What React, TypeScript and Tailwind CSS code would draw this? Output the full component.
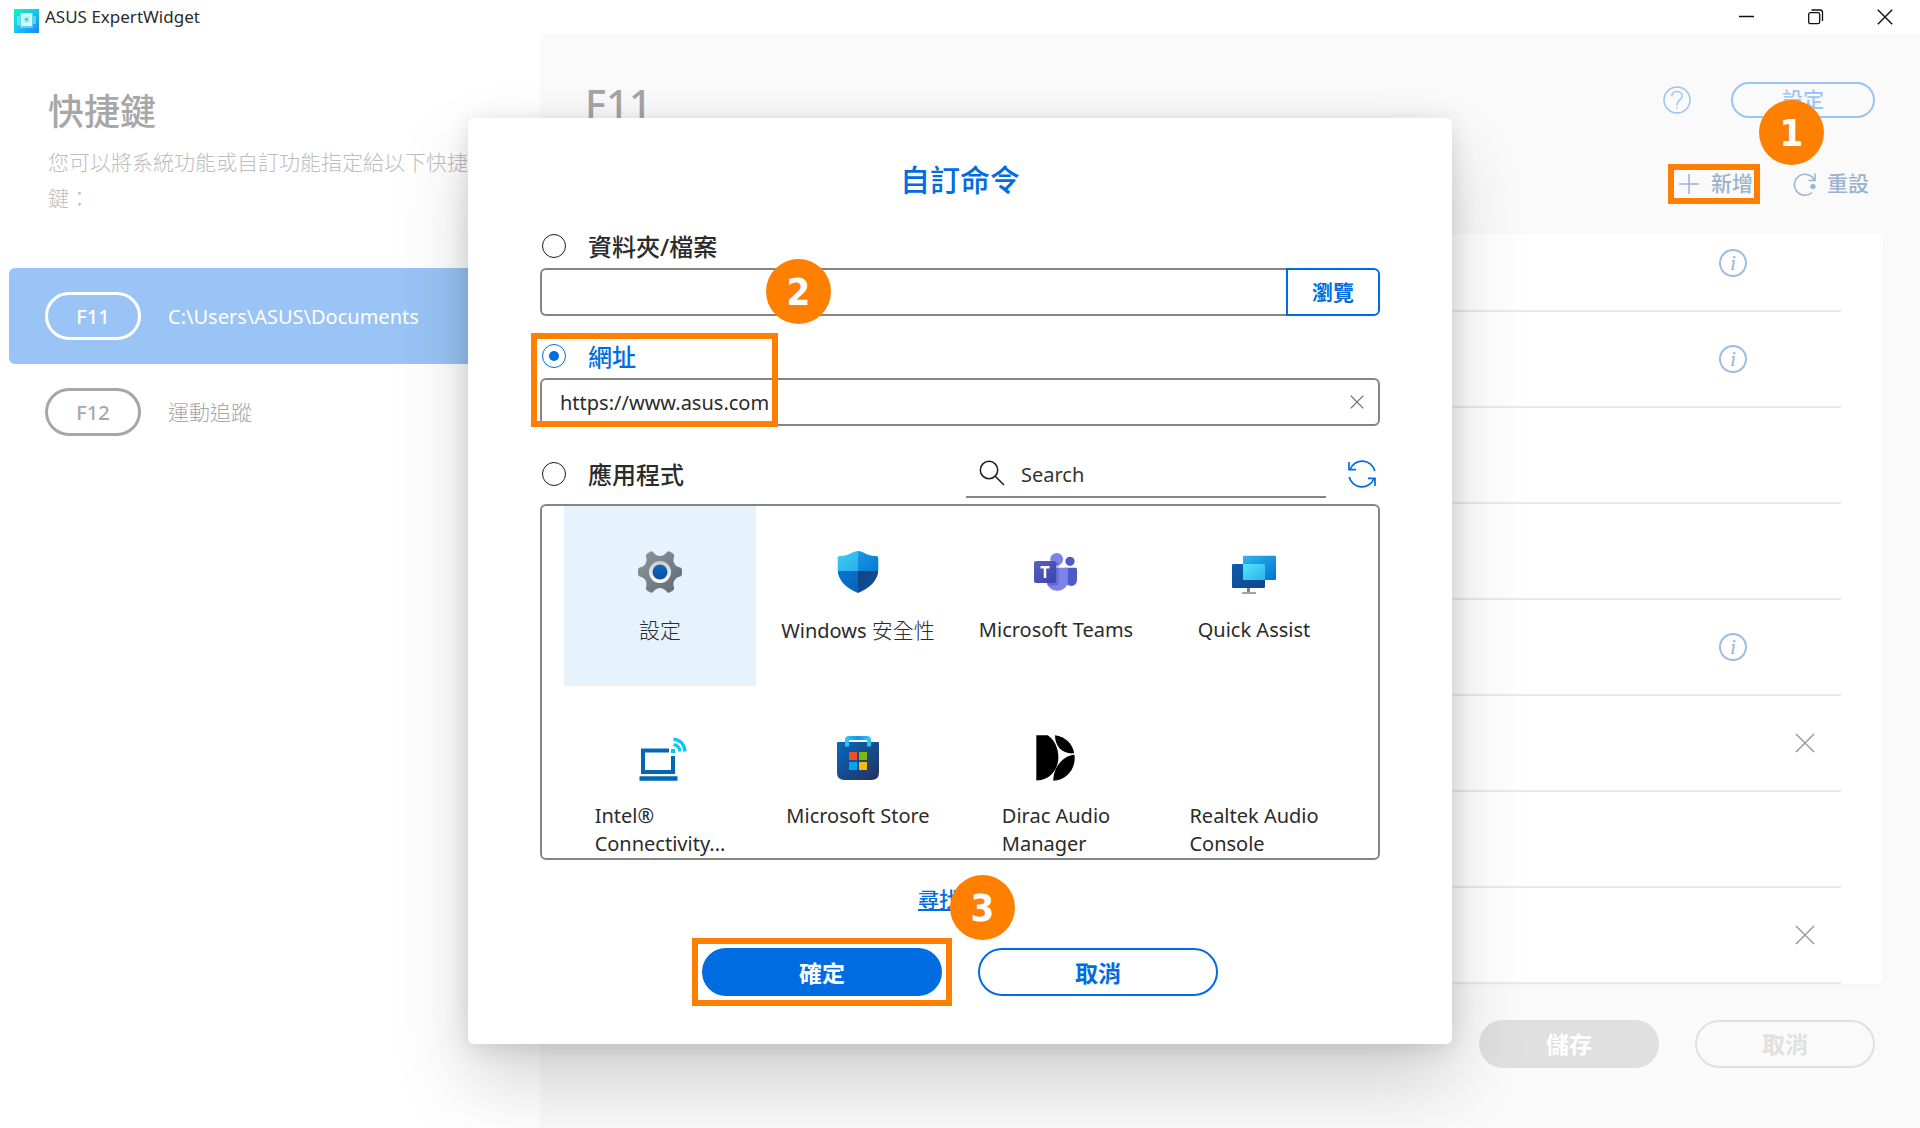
import React from 'react';

type AppEntry = { lines: React.ReactNode[]; icon: React.ReactNode };

function LogoIcon() {
  return (
    <svg width="25" height="24" viewBox="0 0 25 24" aria-hidden="true">
      <defs>
        <linearGradient id="logo" x1="0" y1="0" x2="1" y2="1">
          <stop offset="0" stopColor="#08fcc0" />
          <stop offset="0.5" stopColor="#18c4ee" />
          <stop offset="1" stopColor="#2080ff" />
        </linearGradient>
      </defs>
      <rect width="25" height="24" fill="url(#logo)" />
      <path d="M6 4H19V7H22V15H19V19H6V16H3V7H6Z" fill="#8ce8f8" opacity="0.6" />
      <rect x="7" y="4" width="11" height="13" rx="1" fill="#d8fbfc" />
      <rect x="9" y="7" width="7" height="7" fill="#b4f2f6" />
      <rect x="11" y="9" width="3" height="3" fill="#40cce4" />
    </svg>
  );
}

function CrossIcon({ size, width = 1 }: { size: number; width?: number }) {
  return (
    <svg width={size} height={size} viewBox="0 0 20 20" fill="none" stroke="currentColor" strokeWidth={(width * 20) / size} aria-hidden="true">
      <path d="M1 1 19 19M19 1 1 19" />
    </svg>
  );
}

function GearIcon() {
  return (
    <svg width="48" height="48" viewBox="0 0 48 48" aria-hidden="true">
      <defs>
        <linearGradient id="gear" x1="0" y1="0" x2="1" y2="1">
          <stop offset="0" stopColor="#8f979d" />
          <stop offset="1" stopColor="#5f6a74" />
        </linearGradient>
        <linearGradient id="gearRing" x1="0" y1="0" x2="0" y2="1">
          <stop offset="0" stopColor="#c9cbcd" />
          <stop offset="1" stopColor="#fff" />
        </linearGradient>
        <linearGradient id="gearDot" x1="0" y1="0" x2="0" y2="1">
          <stop offset="0" stopColor="#0868c0" />
          <stop offset="1" stopColor="#0c4f9e" />
        </linearGradient>
      </defs>
      <path
        fill="url(#gear)"
        d="M14.500 3.500 Q16 2.800 17.500 4.500 C21 9.200 27 9.200 30.500 4.500 Q32 2.800 33.500 3.500 L37 5.600 Q38.700 6.800 38 8.800 C36.200 14 39 18.800 44.400 19.600 Q46 20 46 22 V26 Q46 28 44.400 28.400 C39 29.200 36.200 34 38 39.200 Q38.700 41.200 37 42.400 L33.500 44.500 Q32 45.200 30.500 43.500 C27 38.800 21 38.800 17.500 43.500 Q16 45.200 14.500 44.500 L11 42.400 Q9.300 41.200 10 39.200 C11.800 34 9 29.200 3.600 28.400 Q2 28 2 26 V22 Q2 20 3.600 19.600 C9 18.800 11.800 14 10 8.800 Q9.300 6.800 11 5.600Z"
      />
      <circle cx="24" cy="24" r="11" fill="url(#gearRing)" />
      <circle cx="24" cy="24" r="7.500" fill="url(#gearDot)" />
    </svg>
  );
}

function ShieldIcon() {
  return (
    <svg width="48" height="48" viewBox="0 0 48 48" aria-hidden="true">
      <defs>
        <clipPath id="shield">
          <path d="M24 3C29 3 33 8.300 42.500 8Q44.300 8 44.300 10V22C44.300 32 36 40 24 45C12 40 3.700 32 3.700 22V10Q3.700 8 5.500 8C15 8.300 19 3 24 3Z" />
        </clipPath>
        <linearGradient id="sh1" x1="0" y1="0" x2="1" y2="1">
          <stop offset="0" stopColor="#3fd0fa" />
          <stop offset="1" stopColor="#2bb0e8" />
        </linearGradient>
        <linearGradient id="sh2" x1="0" y1="0" x2="1" y2="1">
          <stop offset="0" stopColor="#1c98e4" />
          <stop offset="1" stopColor="#0478d4" />
        </linearGradient>
        <linearGradient id="sh3" x1="0" y1="0" x2="1" y2="1">
          <stop offset="0" stopColor="#0478d4" />
          <stop offset="1" stopColor="#0862b8" />
        </linearGradient>
        <linearGradient id="sh4" x1="0" y1="0" x2="1" y2="1">
          <stop offset="0" stopColor="#143f80" />
          <stop offset="1" stopColor="#0f58a8" />
        </linearGradient>
      </defs>
      <g clipPath="url(#shield)">
        <rect width="24" height="23" fill="url(#sh1)" />
        <rect x="24" width="24" height="23" fill="url(#sh2)" />
        <rect y="23" width="24" height="25" fill="url(#sh3)" />
        <rect x="24" y="23" width="24" height="25" fill="url(#sh4)" />
      </g>
    </svg>
  );
}

function TeamsIcon() {
  return (
    <svg width="48" height="48" viewBox="0 0 48 48" aria-hidden="true">
      <defs>
        <linearGradient id="tm" x1="0" y1="0" x2="1" y2="1">
          <stop offset="0" stopColor="#5a62c3" />
          <stop offset="1" stopColor="#3940ab" />
        </linearGradient>
      </defs>
      <circle cx="38" cy="13.300" r="4.600" fill="#5059c9" />
      <path d="M33 19.700H43.500Q45 19.700 45 21.200V31.500Q45 38 39 38Q36 38 33 35Z" fill="#5059c9" />
      <circle cx="24.700" cy="11.300" r="6.400" fill="#7b83eb" />
      <path d="M14.700 19.700H34.500Q36 19.700 36 21.200V32C36 38.500 31.500 42.700 25.300 42.700C19 42.700 14.700 38.500 14.700 32Z" fill="#7b83eb" />
      <path d="M15 14H24.500Q26.500 14 26.500 16V35Q26.500 37.500 24 37.500H15Z" fill="#3a3f9c" opacity="0.35" />
      <rect x="2" y="13" width="22" height="22" rx="2" fill="url(#tm)" />
      <path d="M8.500 19.200H17.500M13 18V30" stroke="#fff" strokeWidth="2.500" />
    </svg>
  );
}

function QuickAssistIcon() {
  return (
    <svg width="48" height="48" viewBox="0 0 48 48" aria-hidden="true">
      <defs>
        <linearGradient id="qa1" x1="0" y1="0" x2="1" y2="1">
          <stop offset="0" stopColor="#2fb4ee" />
          <stop offset="1" stopColor="#0274d2" />
        </linearGradient>
        <linearGradient id="qa2" x1="0" y1="0" x2="1" y2="1">
          <stop offset="0" stopColor="#0c5cae" />
          <stop offset="1" stopColor="#13468a" />
        </linearGradient>
        <linearGradient id="qa3" x1="0" y1="0" x2="1" y2="1">
          <stop offset="0" stopColor="#52e4ff" />
          <stop offset="1" stopColor="#2cb2ea" />
        </linearGradient>
      </defs>
      <rect x="17" y="40" width="3" height="4.500" fill="#7c8792" />
      <rect x="12" y="44" width="14" height="2" rx="0.700" fill="#9aa3ab" />
      <rect x="13" y="7.700" width="33" height="24.300" rx="1.200" fill="url(#qa1)" />
      <rect x="2" y="16" width="33" height="24" rx="1.200" fill="url(#qa2)" />
      <path d="M13 16H34Q35 16 35 17V32H14Q13 32 13 31Z" fill="url(#qa3)" />
    </svg>
  );
}

function IntelIcon() {
  return (
    <svg width="48" height="48" viewBox="0 0 48 48" className="overflow-visible" fill="none" aria-hidden="true">
      <path d="M33 16.500H7V38H37V22" stroke="#0068b5" strokeWidth="4" />
      <path d="M3.500 44.500H41.500" stroke="#0068b5" strokeWidth="4.400" />
      <rect x="35" y="15" width="4" height="4" fill="#00c7fd" />
      <path d="M37.500 10.500Q43.500 11.500 44 17.500" stroke="#00c7fd" strokeWidth="3.200" />
      <path d="M37.500 5Q48 6.500 49 17.500" stroke="#00c7fd" strokeWidth="3.200" />
    </svg>
  );
}

function StoreIcon() {
  return (
    <svg width="48" height="48" viewBox="0 0 48 48" aria-hidden="true">
      <defs>
        <linearGradient id="st" x1="0" y1="0" x2="1" y2="1">
          <stop offset="0" stopColor="#0669bd" />
          <stop offset="1" stopColor="#26305c" />
        </linearGradient>
        <linearGradient id="stH" x1="0" y1="0" x2="1" y2="0">
          <stop offset="0" stopColor="#30c4f4" />
          <stop offset="0.5" stopColor="#1890e8" />
          <stop offset="1" stopColor="#30c4f4" />
        </linearGradient>
      </defs>
      <path d="M3 9Q3 8 4 8H44Q45 8 45 9V38.500Q45 46 37.500 46H10.500Q3 46 3 38.500Z" fill="url(#st)" />
      <path d="M14 6.500H34V8H14Z" fill="#fff" />
      <path d="M13 12.500V6Q13 4 15 4H33Q35 4 35 6V12.500" fill="none" stroke="url(#stH)" strokeWidth="4" />
      <rect x="15" y="18" width="8" height="8" fill="#f25022" />
      <rect x="25" y="18" width="8" height="8" fill="#7fba00" />
      <rect x="15" y="28" width="8" height="8" fill="#00a4ef" />
      <rect x="25" y="28" width="8" height="8" fill="#ffb900" />
    </svg>
  );
}

function DiracIcon() {
  return (
    <svg width="48" height="48" viewBox="0 0 48 48" fill="#000" aria-hidden="true">
      <path d="M4.300 1.200H15.500C31.500 11 31.500 45 4.300 46.600Z" />
      <path d="M23 1.300C33 2.500 40.500 9.500 42.200 19.300C31 20.500 23 13 23 1.300Z" />
      <path d="M42.400 20.800C44.500 35 34 46.500 21.300 46.700C21.300 34 30 22 42.400 20.800Z" />
    </svg>
  );
}

const apps: AppEntry[] = [
  { lines: [<span className="text-[21px] font-light">設定</span>], icon: <GearIcon /> },
  {
    lines: [
      <>
        Windows <span className="text-[21px] font-light">安全性</span>
      </>,
    ],
    icon: <ShieldIcon />,
  },
  { lines: ['Microsoft Teams'], icon: <TeamsIcon /> },
  { lines: ['Quick Assist'], icon: <QuickAssistIcon /> },
  { lines: ['Intel®', 'Connectivity...'], icon: <IntelIcon /> },
  { lines: ['Microsoft Store'], icon: <StoreIcon /> },
  { lines: ['Dirac Audio', 'Manager'], icon: <DiracIcon /> },
  { lines: ['Realtek Audio', 'Console'], icon: null },
];

const rows: Array<'info' | 'remove' | null> = ['info', 'info', null, null, 'info', 'remove', null, 'remove'];

function Badge({ n, className }: { n: number; className: string }) {
  return (
    <span
      className={`absolute z-10 flex size-[65px] items-center justify-center rounded-full bg-[#ff8000] font-['DejaVu_Sans_Condensed','DejaVu_Sans',sans-serif] text-[38px] leading-none font-bold text-white ${className}`}
    >
      {n}
    </span>
  );
}

function TitleBar() {
  return (
    <header className="flex h-[34px] shrink-0 items-center justify-between bg-white">
      <div className="flex items-center gap-[6px] pl-[14px]">
        <span className="mt-2">
          <LogoIcon />
        </span>
        <span className="text-[17px] leading-6 text-[#2b2b2b]">ASUS ExpertWidget</span>
      </div>
      <div className="flex h-full pr-px text-[#111]">
        <button aria-label="最小化" className="flex w-[69px] items-center justify-center">
          <svg width="16" height="16" viewBox="0 0 16 16" aria-hidden="true">
            <path d="M0 7.500H15" stroke="currentColor" strokeWidth="1.500" />
          </svg>
        </button>
        <button aria-label="還原" className="flex w-[69px] items-center justify-center">
          <svg width="16" height="16" viewBox="0 0 16 16" fill="none" stroke="currentColor" strokeWidth="1.300" aria-hidden="true">
            <rect x="0.700" y="3.700" width="11" height="11" rx="1.800" />
            <path d="M3.500 1H12Q14.500 1 14.500 3.500V12" />
          </svg>
        </button>
        <button aria-label="關閉" className="flex w-[69px] items-center justify-center">
          <CrossIcon size={16} width={1.4} />
        </button>
      </div>
    </header>
  );
}

function Sidebar() {
  return (
    <aside className="w-[540px] shrink-0 bg-white pt-[54px]">
      <h1 className="pl-12 text-[36px] leading-[48px] font-medium text-[#a7a7a7]">快捷鍵</h1>
      <p className="mt-2 pr-16 pl-12 text-[21px] leading-9 font-light text-[#bdbdbd]">
        您可以將系統功能或自訂功能指定給以下快捷鍵：
      </p>
      <nav className="mx-[9px] mt-[52px]">
        <button className="flex h-24 w-full items-center gap-[27px] rounded-md bg-[#99c4f5] pl-9 text-left text-white">
          <span className="flex h-12 w-24 items-center justify-center rounded-full border-3 border-white pt-0.5 text-[20px] font-medium">F11</span>
          <span className="pt-0.5 text-[20px]">C:\Users\ASUS\Documents</span>
        </button>
        <button className="flex h-24 w-full items-center gap-[27px] rounded-md pl-9 text-left text-[#a7a7a7]">
          <span className="flex h-12 w-24 items-center justify-center rounded-full border-3 border-[#a7a7a7] pt-0.5 text-[20px] font-medium">F12</span>
          <span className="pt-0.5 text-[21px] font-light">運動追蹤</span>
        </button>
      </nav>
    </aside>
  );
}

function MainPane() {
  return (
    <main className="flex min-w-0 flex-1 flex-col bg-[#fafafa] pt-[42px] pb-[60px]">
      <div className="flex h-12 items-center pr-[45px] pl-[45px]">
        <h2 className="pt-2 text-[40px] leading-none font-medium text-[#a5a5a5]">F11</h2>
        <button aria-label="說明" className="ml-auto text-[#99c4f5]">
          <svg width="28" height="28" viewBox="0 0 28 28" fill="none" stroke="currentColor" strokeWidth="1.500" aria-hidden="true">
            <circle cx="14" cy="14" r="13" />
            <path d="M8.800 10.500C8.800 7.500 11 5.500 14 5.500S19.200 7.500 19.200 10.200C19.200 13.800 14 14 14 18.500V19.500M14 21.200V22.800" />
          </svg>
        </button>
        <button className="ml-10 flex h-9 w-36 items-center justify-center rounded-full border-2 border-[#99c4f5] text-[21px] font-medium text-[#99c4f5]">
          設定
        </button>
      </div>

      <div className="mt-10 flex h-10 items-center justify-end gap-10 pr-[51px] text-[21px] font-medium text-[#9ab3d0]">
        <div className="relative flex h-full items-center">
          <button className="flex items-center gap-3">
            <svg width="20" height="20" viewBox="0 0 20 20" stroke="currentColor" strokeWidth="1.500" aria-hidden="true">
              <path d="M10 0V20M0 10H20" />
            </svg>
            新增
          </button>
          <span className="pointer-events-none absolute inset-y-0 -right-[7px] -left-[11px] border-6 border-[#ff8000]" />
          <Badge n={1} className="bottom-[39px] left-20" />
        </div>
        <button className="flex items-center gap-[10px]">
          <svg width="24" height="24" viewBox="0 0 24 24" fill="none" stroke="currentColor" strokeWidth="1.500" aria-hidden="true">
            <path d="M19 20.500A10.500 10.500 0 1 1 21.500 8.500M22 1.500V8.500H15.500" />
            <circle cx="20" cy="14.500" r="2.600" fill="currentColor" stroke="none" />
          </svg>
          重設
        </button>
      </div>

      <div className="mr-[37px] ml-9 mt-[30px] overflow-hidden rounded-md bg-white px-[42px] shadow-[0_1px_4px_rgba(0,0,0,0.03)]">
        <ul className="-mt-[18px]">
          {rows.map((kind, i) => (
            <li key={i} className="flex h-24 items-center justify-end border-b-2 border-[#e9e9e9]">
              <span className="flex w-[72px] justify-center">
                {kind === 'info' && (
                  <button
                    aria-label="資訊"
                    className="flex size-7 items-center justify-center rounded-full border-2 border-[#99bde6] font-['Liberation_Serif',serif] text-[20px] leading-none text-[#8fb2dc] italic"
                  >
                    i
                  </button>
                )}
              </span>
              <span className="flex w-[72px] justify-center text-[#9c9c9c]">
                {kind === 'remove' && (
                  <button aria-label="移除">
                    <CrossIcon size={20} width={1.5} />
                  </button>
                )}
              </span>
            </li>
          ))}
        </ul>
      </div>

      <div className="mt-9 flex justify-end gap-9 pr-[45px] text-[23px] font-bold">
        <button className="h-12 w-[180px] rounded-full bg-[#e0e0e0] text-white">儲存</button>
        <button className="h-12 w-[180px] rounded-full border-2 border-[#e0e0e0] text-[#e0e0e0]">取消</button>
      </div>
    </main>
  );
}

const radio =
  "grid size-6 shrink-0 appearance-none place-items-center rounded-full border border-[#1c1c1c] checked:border-[#006ce1] checked:before:size-[10px] checked:before:rounded-full checked:before:bg-[#006ce1] checked:before:content-['']";

function CommandDialog() {
  return (
    <section
      role="dialog"
      aria-label="自訂命令"
      className="w-[984px] max-w-full rounded-md bg-white px-[72px] pt-[44px] pb-12 text-[#2b2b2b] shadow-[0_38px_76px_rgba(0,0,0,0.17),0_3px_24px_rgba(0,0,0,0.12)]"
    >
      <h2 className="text-center text-[30px] leading-9 font-medium text-[#006ce1]">自訂命令</h2>

      <div className="mt-[30px] flex h-9 items-center gap-[22px] pl-[2px]">
        <input id="opt-file" type="radio" name="target" className={radio} />
        <label htmlFor="opt-file" className="pt-0.5 text-[24px] leading-9 font-medium">資料夾/檔案</label>
      </div>
      <div className="mt-1 flex h-12">
        <input aria-label="資料夾/檔案路徑" className="min-w-0 flex-1 rounded-l-md border-2 border-r-0 border-[#858585] px-[18px] text-[20px]" />
        <button className="w-[94px] rounded-r-md border-2 border-[#006ce1] pt-0.5 text-[21px] font-bold text-[#006ce1]">瀏覽</button>
      </div>

      <div className="relative mt-[22px]">
        <div className="flex h-9 items-center gap-[22px] pl-[2px]">
          <input id="opt-url" type="radio" name="target" defaultChecked className={radio} />
          <label htmlFor="opt-url" className="pt-0.5 text-[24px] leading-9 font-medium text-[#006ce1]">網址</label>
        </div>
        <div className="mt-1 flex h-12 items-center rounded-md border-2 border-[#858585] pr-[14px] pl-[18px]">
          <input aria-label="網址" defaultValue="https://www.asus.com" className="min-w-0 flex-1 pt-0.5 text-[20px]" />
          <button aria-label="清除" className="text-[#6a6a6a]">
            <CrossIcon size={14} width={1.2} />
          </button>
        </div>
        <div className="pointer-events-none absolute -top-[5px] -bottom-px -left-[9px] w-[247px] border-6 border-[#ff8000]">
          <Badge n={2} className="bottom-[97px] left-[229px]" />
        </div>
      </div>

      <div className="mt-6 flex h-12 items-center pl-[2px]">
        <input id="opt-app" type="radio" name="target" className={radio} />
        <label htmlFor="opt-app" className="ml-[22px] pt-0.5 text-[24px] leading-9 font-medium">應用程式</label>
        <div className="ml-auto flex h-full w-[360px] items-center gap-4 border-b-2 border-[#858585] pl-[13px]">
          <svg width="26" height="26" viewBox="0 0 26 26" fill="none" stroke="#1c1c1c" strokeWidth="1.500" aria-hidden="true">
            <circle cx="10" cy="10" r="8.700" />
            <path d="M16.200 16.200 25 25" />
          </svg>
          <input type="search" aria-label="Search" placeholder="Search" className="min-w-0 flex-1 pt-1 text-[20px] outline-none placeholder:text-[#333]" />
        </div>
        <button aria-label="重新整理" className="mr-1 ml-[22px] text-[#006ce1]">
          <svg width="28" height="28" viewBox="0 0 28 28" fill="none" stroke="currentColor" strokeWidth="1.700" aria-hidden="true">
            <path d="M1 2V9.700H8M2 9.500A13 13 0 0 1 26.800 11" />
            <path d="M27 26V18.300H20M26 18.500A13 13 0 0 1 1.200 17" />
          </svg>
        </button>
      </div>

      <div className="mt-[6px] h-[356px] overflow-hidden rounded-md border-2 border-[#858585] pr-7 pl-[22px]">
        <div className="grid grid-cols-4 gap-[6px]">
          {apps.map((app, i) => (
            <button key={i} className={`flex h-[180px] flex-col items-center pt-[42px] ${i === 0 ? 'bg-[#e6f3fc]' : ''}`}>
              <span className="size-12 shrink-0">{app.icon}</span>
              <span className="mt-5 text-left text-[20px] leading-7">
                {app.lines.map((line, j) => (
                  <span key={j} className="block h-7 whitespace-nowrap">
                    {line}
                  </span>
                ))}
              </span>
            </button>
          ))}
        </div>
      </div>

      <div className="mt-6 flex justify-center">
        <a href="#" className="text-[21px] leading-[30px] font-medium text-[#006ce1] underline">尋找更多</a>
      </div>

      <div className="mt-[34px] flex justify-center gap-9 text-[23px] font-bold">
        <div className="relative">
          <button className="h-12 w-60 rounded-full bg-[#006ce1] pt-0.5 text-white">確定</button>
          <span className="pointer-events-none absolute -inset-[10px] border-6 border-[#ff8000]" />
          <Badge n={3} className="bottom-14 left-[248px]" />
        </div>
        <button className="h-12 w-60 rounded-full border-2 border-[#006ce1] pt-0.5 text-[#006ce1]">取消</button>
      </div>
    </section>
  );
}

export default function App() {
  return (
    <div className="flex min-h-screen flex-col bg-white font-['Noto_Sans','Noto_Sans_CJK_TC',sans-serif]" lang="zh-Hant">
      <TitleBar />
      <div className="relative flex flex-1 overflow-hidden">
        <Sidebar />
        <MainPane />
        <div className="absolute inset-0 flex items-center justify-center">
          <CommandDialog />
        </div>
      </div>
    </div>
  );
}
